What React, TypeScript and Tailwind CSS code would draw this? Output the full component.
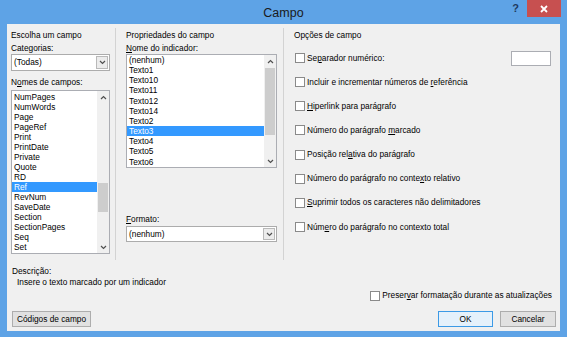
import React from "react";

function Chevron({ dir }: { dir: "up" | "down" }) {
  return (
    <svg width="7" height="5" viewBox="0 0 7 5" className="block">
      <polyline
        points={dir === "down" ? "1,1 3.5,3.5 6,1" : "1,4 3.5,1.5 6,4"}
        fill="none"
        stroke="#505050"
        strokeWidth="1.2"
      />
    </svg>
  );
}

function Check() {
  return <div className="w-[10px] h-[10px] shrink-0 border border-[#8a8a8a] bg-white" />;
}

function Combo({ text, hClass }: { text: string; hClass: string }) {
  return (
    <div className={`${hClass} border border-[#acacac] bg-white flex items-center`}>
      <span className="flex-1 pl-[2px] leading-[11px]">{text}</span>
      <div className="w-[12px] self-stretch my-px mr-px border border-[#b9b9b9] bg-[#ececec] flex items-center justify-center">
        <Chevron dir="down" />
      </div>
    </div>
  );
}

function ListBox({
  items,
  selected,
  boxClass,
  rowClass,
  padClass,
  thumbClass,
}: {
  items: string[];
  selected: string;
  boxClass: string;
  rowClass: string;
  padClass: string;
  thumbClass: string;
}) {
  return (
    <div className={`${boxClass} border border-[#abadb3] bg-white flex`}>
      <div className={`flex-1 ${padClass} overflow-hidden`}>
        {items.map((it) => (
          <div
            key={it}
            className={`${rowClass} pl-[2px] whitespace-nowrap ${
              it === selected ? "bg-[#3399ff] text-white" : ""
            }`}
          >
            {it}
          </div>
        ))}
      </div>
      <div className="w-[12px] bg-[#f0f0f0] flex flex-col">
        <div className="h-[12px] flex items-center justify-center">
          <Chevron dir="up" />
        </div>
        <div className="flex-1 flex flex-col">
          <div className={`${thumbClass} mx-px bg-[#cdcdcd]`} />
        </div>
        <div className="h-[12px] flex items-center justify-center">
          <Chevron dir="down" />
        </div>
      </div>
    </div>
  );
}

function Opt({ children }: { children: React.ReactNode }) {
  return (
    <div className="h-[24.15px] flex items-center">
      <div className="ml-px">
        <Check />
      </div>
      <span className="ml-[2px] leading-[11px] whitespace-nowrap">{children}</span>
    </div>
  );
}

export default function App() {
  const names = [
    "NumPages",
    "NumWords",
    "Page",
    "PageRef",
    "Print",
    "PrintDate",
    "Private",
    "Quote",
    "RD",
    "Ref",
    "RevNum",
    "SaveDate",
    "Section",
    "SectionPages",
    "Seq",
    "Set",
  ];
  const marks = [
    "(nenhum)",
    "Texto1",
    "Texto10",
    "Texto11",
    "Texto12",
    "Texto14",
    "Texto2",
    "Texto3",
    "Texto4",
    "Texto5",
    "Texto6",
  ];
  return (
    <div className="w-[567px] h-[337px] bg-[#5ea3e6] flex flex-col overflow-hidden font-['Liberation_Sans',Arial,sans-serif] text-black">
      {/* Title bar */}
      <div className="h-[24px] grid grid-cols-[1fr_auto_1fr]">
        <div />
        <div className="text-[12.5px] leading-[24px] pt-px text-[#1a1a1a]">Campo</div>
        <div className="flex justify-end items-start">
          <div className="text-[11px] font-bold leading-[16px] text-[#1e3a5f] mr-[8px]">?</div>
          <div className="w-[34px] h-[17px] bg-[#c75050] mr-[6px] flex items-center justify-center">
            <svg width="8" height="8" viewBox="0 0 8 8" className="block">
              <path d="M1 1L7 7M7 1L1 7" stroke="#ffffff" strokeWidth="1.8" />
            </svg>
          </div>
        </div>
      </div>

      {/* Content */}
      <div className="mx-[7px] h-[307px] bg-[#f0f0f0] flex flex-col text-[8.3px] leading-[11px]">
        <div className="mt-[4px] h-[232px] flex">
          {/* Left column */}
          <div className="ml-[4px] w-[99px] pt-[2px] flex flex-col">
            <div className="h-[11px] whitespace-nowrap">Escolha um campo</div>
            <div className="mt-[2px] h-[11px]">Categorias:</div>
            <Combo text="(Todas)" hClass="h-[17px]" />
            <div className="mt-[6px] h-[11px] whitespace-nowrap">
              N<span className="underline">o</span>mes de campos:
            </div>
            <div className="mt-[2px]">
              <ListBox
                items={names}
                selected="Ref"
                boxClass="h-[164px]"
                rowClass="h-[10px] leading-[10px]"
                padClass="pt-px"
                thumbClass="mt-[80px] h-[29px]"
              />
            </div>
          </div>
          <div className="ml-[5px] w-px bg-[#d3d3d3]" />
          {/* Middle column */}
          <div className="ml-[10px] w-[151px] pt-[2px] flex flex-col">
            <div className="h-[11px] whitespace-nowrap">Propriedades do campo</div>
            <div className="mt-[2px] h-[11px] whitespace-nowrap">
              <span className="underline">N</span>ome do indicador:
            </div>
            <ListBox
              items={marks}
              selected="Texto3"
              boxClass="h-[114px]"
              rowClass="h-[10.17px] leading-[10.17px]"
              padClass="pt-0"
              thumbClass="mt-px h-[67px]"
            />
            <div className="mt-[46px] h-[11px]">
              <span className="underline">F</span>ormato:
            </div>
            <div className="mt-px">
              <Combo text="(nenhum)" hClass="h-[16px]" />
            </div>
          </div>
          <div className="ml-[6px] w-px bg-[#d3d3d3]" />
          {/* Right column */}
          <div className="ml-[10px] flex-1 pr-[9px] pt-[2px] flex flex-col">
            <div className="h-[11px] whitespace-nowrap">Opções de campo</div>
            <div className="mt-[5px] flex flex-col">
              <div className="h-[24.15px] flex items-center">
                <div className="ml-px">
                  <Check />
                </div>
                <span className="ml-[2px] leading-[11px] whitespace-nowrap">
                  Se<span className="underline">p</span>arador numérico:
                </span>
                <div className="ml-auto w-[40px] h-[15px] border border-[#abadb3] bg-white" />
              </div>
              <Opt>
                Incluir e incrementar números de <span className="underline">r</span>eferência
              </Opt>
              <Opt>
                <span className="underline">H</span>iperlink para parágrafo
              </Opt>
              <Opt>
                Número do parágrafo <span className="underline">m</span>arcado
              </Opt>
              <Opt>
                Posição rel<span className="underline">a</span>tiva do parágrafo
              </Opt>
              <Opt>
                Número do parágrafo no conte<span className="underline">x</span>to relativo
              </Opt>
              <Opt>
                <span className="underline">S</span>uprimir todos os caracteres não delimitadores
              </Opt>
              <Opt>
                Núm<span className="underline">e</span>ro do parágrafo no contexto total
              </Opt>
            </div>
          </div>
        </div>

        {/* Description */}
        <div className="mt-[6px] pl-[5px] h-[11px]">Descrição:</div>
        <div className="pl-[10px] h-[11px] whitespace-nowrap">Insere o texto marcado por um indicador</div>

        {/* Preserve */}
        <div className="mt-[2px] h-[11px] flex items-center justify-end pr-[8px]">
          <Check />
          <span className="ml-[2px] whitespace-nowrap">
            Preser<span className="underline">v</span>ar formatação durante as atualizações
          </span>
        </div>

        {/* Buttons */}
        <div className="mt-[10px] h-[16px] flex">
          <div className="ml-[5px] w-[79px] border border-[#adadad] bg-[#e1e1e1] flex items-center justify-center whitespace-nowrap">
            Códigos de campo
          </div>
          <div className="ml-auto w-[55px] border border-[#3c9ae6] bg-[#e5f1fb] flex items-center justify-center">
            OK
          </div>
          <div className="ml-[7px] mr-[4px] w-[56px] border border-[#adadad] bg-[#e1e1e1] flex items-center justify-center">
            Cancelar
          </div>
        </div>
      </div>
    </div>
  );
}
